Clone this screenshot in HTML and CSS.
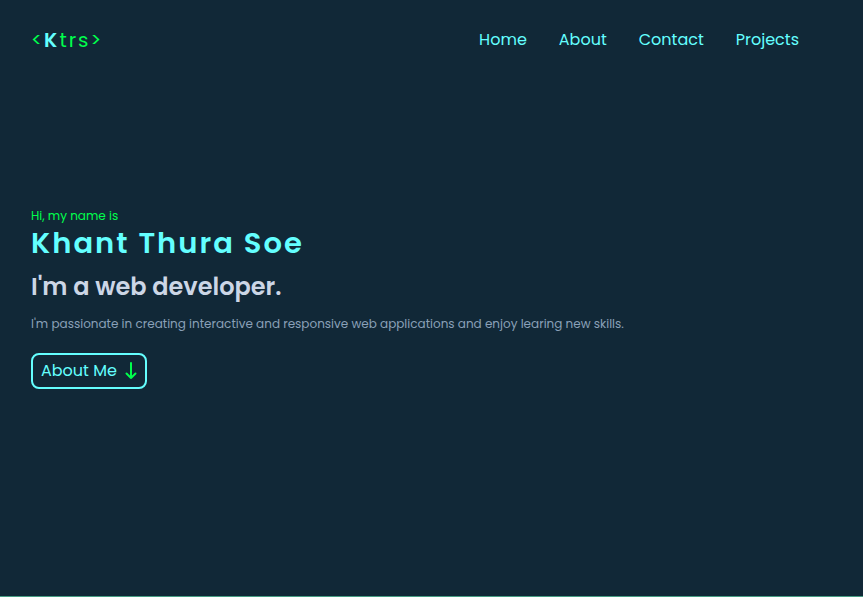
FILE: index.html
```html
<!DOCTYPE html>
<html lang="en">
<head>
<meta charset="utf-8">
<meta name="viewport" content="width=device-width, initial-scale=1">
<title>Ktrs</title>
<link rel="stylesheet" href="styles.css">
</head>
<body>
<header class="header">
  <a class="logo" href="#home">&lt;<span class="logo-initial">K</span>trs&gt;</a>
  <nav class="nav">
    <a href="#home">Home</a>
    <a href="#about">About</a>
    <a href="#contact">Contact</a>
    <a href="#projects">Projects</a>
  </nav>
</header>
<main class="hero" id="home">
  <p class="greeting">Hi, my name is</p>
  <h1 class="name">Khant Thura Soe</h1>
  <h2 class="role">I'm a web developer.</h2>
  <p class="intro">I'm passionate in creating interactive and responsive web applications and enjoy learing new skills.</p>
  <a class="button" href="#about">About Me
    <svg class="arrow" viewBox="0 0 12 18" aria-hidden="true"><path d="M6 1v15M1.500 11.500L6 16l4.500-4.500"/></svg>
  </a>
</main>
</body>
</html>
```

FILE: styles.css
```css
* {
  box-sizing: border-box;
  margin: 0;
}

body {
  display: flex;
  flex-direction: column;
  min-height: 100vh;
  background: #112837;
  border-bottom: 1px solid #479d84;
  font-family: Poppins, Inter, "Open Sans", sans-serif;
  line-height: 22px;
  color: #64ffff;
}

a {
  color: inherit;
  text-decoration: none;
}

.header {
  display: flex;
  align-items: center;
  justify-content: space-between;
  height: 80px;
  padding: 0 64px 0 31px;
}

.logo {
  color: #00ff4c;
  font-size: 20px;
  line-height: 30px;
  letter-spacing: 2px;
}

.logo-initial {
  color: #64ffff;
  font-weight: 600;
}

.nav {
  display: flex;
  gap: 32px;
  font-size: 16px;
}

.hero {
  flex: 1;
  padding: 126px 31px 32px;
}

.greeting {
  color: #00ff4c;
  font-size: 12px;
  line-height: 20px;
}

.name {
  font-size: 29px;
  font-weight: 600;
  line-height: 34px;
  letter-spacing: 2px;
}

.role {
  margin-top: 8px;
  color: #ccd6e6;
  font-size: 24px;
  font-weight: 600;
  line-height: 38px;
}

.intro {
  margin-top: 8px;
  color: #8aa0b8;
  font-size: 12px;
  line-height: 20px;
}

.button {
  display: inline-flex;
  align-items: center;
  gap: 8px;
  height: 36px;
  margin-top: 19px;
  padding: 0 8px;
  border: 2px solid #64ffff;
  border-radius: 8px;
  font-size: 16px;
}

.arrow {
  width: 12px;
  height: 18px;
  fill: none;
  stroke: #00ff4c;
  stroke-width: 2;
  stroke-linecap: round;
  stroke-linejoin: round;
}
```
